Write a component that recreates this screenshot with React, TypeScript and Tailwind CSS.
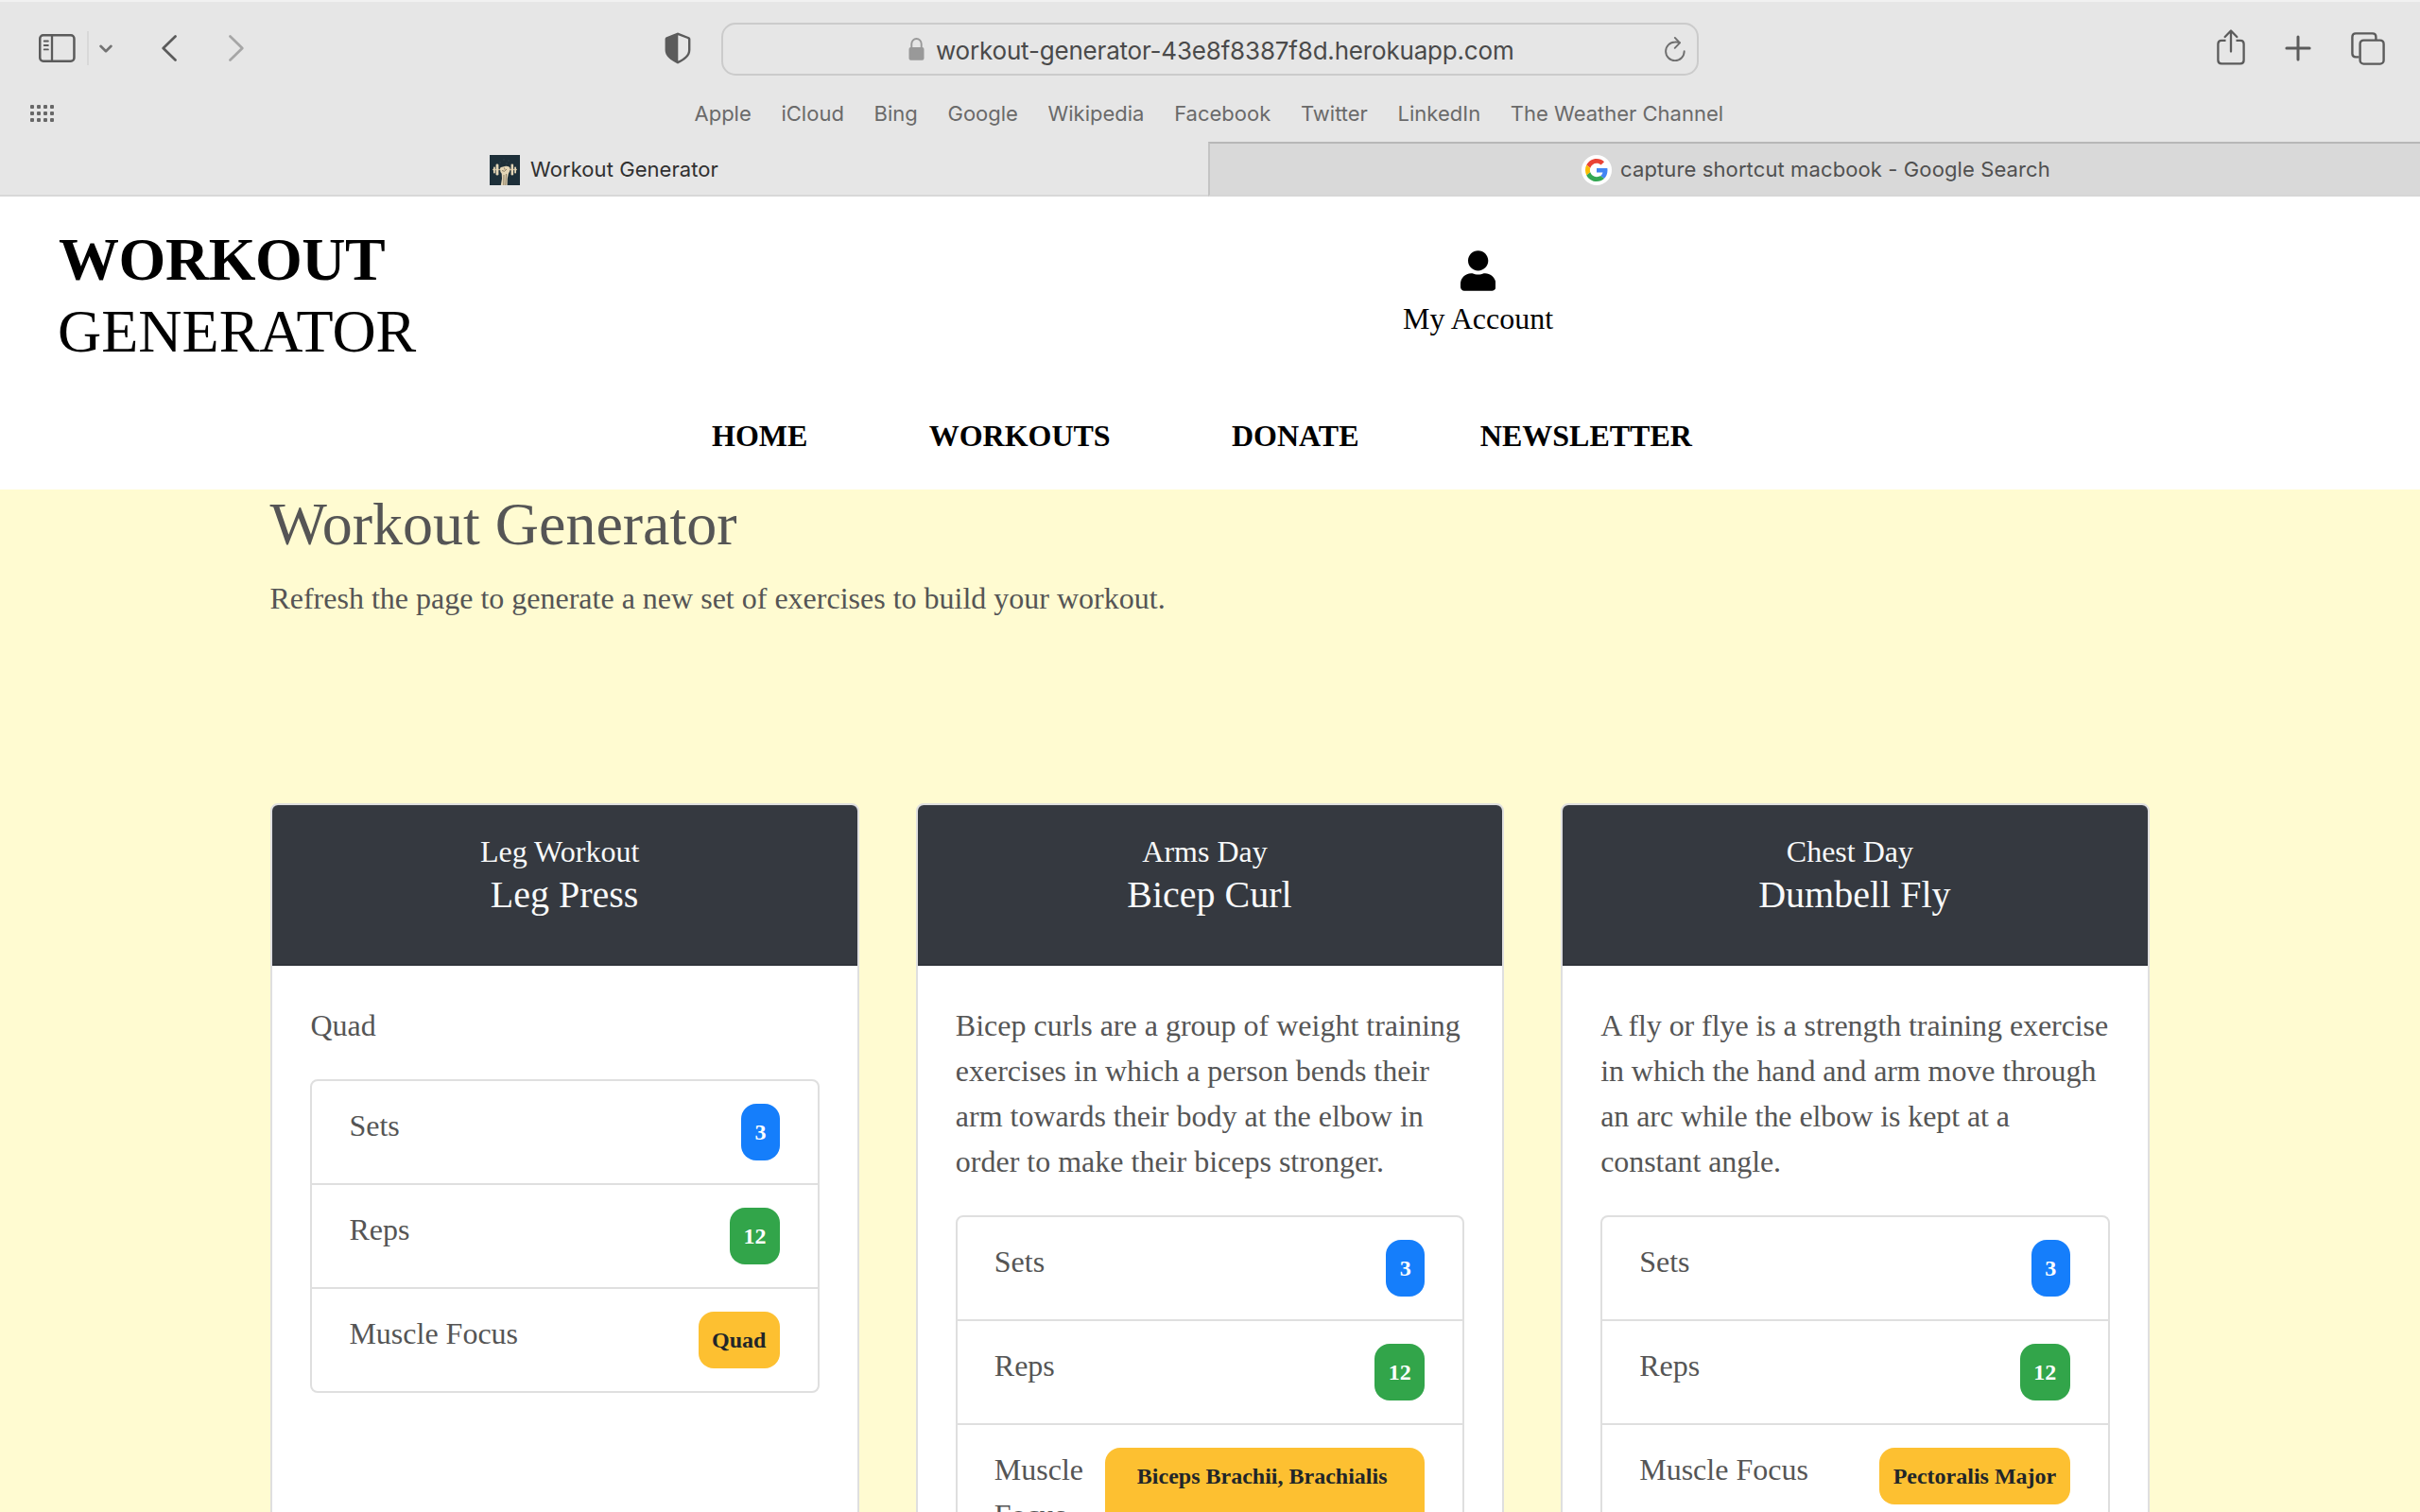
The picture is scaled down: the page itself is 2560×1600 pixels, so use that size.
import React from "react";
import { FaUser } from "react-icons/fa";

const bookmarks = ["Apple", "iCloud", "Bing", "Google", "Wikipedia", "Facebook", "Twitter", "LinkedIn", "The Weather Channel"];
const navLinks = ["HOME", "WORKOUTS", "DONATE", "NEWSLETTER"];

type Workout = {
  day: string;
  name: string;
  description: string;
  sets: number;
  reps: number;
  focus: string;
  wideFocus?: boolean;
  tight?: boolean;
};

const workouts: Workout[] = [
  { day: "Leg Workout", name: "Leg Press", description: "Quad", sets: 3, reps: 12, focus: "Quad" },
  {
    day: "Arms Day",
    name: "Bicep Curl",
    description:
      "Bicep curls are a group of weight training exercises in which a person bends their arm towards their body at the elbow in order to make their biceps stronger.",
    sets: 3,
    reps: 12,
    focus: "Biceps Brachii, Brachialis\u00a0",
    wideFocus: true,
  },
  {
    day: "Chest Day",
    name: "Dumbell Fly",
    description:
      "A fly or flye is a strength training exercise in which the hand and arm move through an arc while the elbow is kept at a constant angle.",
    sets: 3,
    reps: 12,
    focus: "Pectoralis Major",
    tight: true,
  },
];

function SidebarIcon() {
  return (
    <svg width="39" height="30" viewBox="0 0 39 30" fill="none" stroke="#5b5b5b" strokeLinecap="round">
      <rect x="1.25" y="1.25" width="36.2" height="27.5" rx="3.5" strokeWidth="2.5" />
      <path d="M14 1.5v27" strokeWidth="2.3" strokeLinecap="butt" />
      <path d="M5.7 7.5h4.2M5.7 12h4.2M5.7 16.4h4.2" strokeWidth="1.8" />
    </svg>
  );
}

function ShieldIcon() {
  return (
    <svg width="28" height="34" viewBox="0 0 28 34">
      <path d="M14 0.6 26 5.2Q27.4 5.8 27.4 7.4V19C27.4 25.5 21.5 29.8 14 33.4 6.5 29.8 0.6 25.5 0.6 19V7.4Q0.6 5.8 2 5.2Z" fill="#5b5b5b" />
      <path d="M14.3 3.2 24.4 7Q25 7.3 25 8V19C25 23.9 20.7 27.5 14.3 30.6Z" fill="#e6e6e6" />
    </svg>
  );
}

function LockIcon() {
  return (
    <svg width="17" height="24" viewBox="0 0 17 24">
      <path d="M3.3 11V6.500a5.200 5.500 0 0 1 10.400 0V11" fill="none" stroke="#999" strokeWidth="1.9" />
      <rect x="0.5" y="10" width="16" height="13.7" rx="2" fill="#999" />
    </svg>
  );
}

function ReloadIcon() {
  return (
    <svg width="24" height="28" viewBox="0 0 24 28" fill="none" stroke="#6e6e6e" strokeWidth="1.9" strokeLinecap="round" strokeLinejoin="round">
      <path d="M21.7 16.3A9.8 9.8 0 1 1 11.9 6.500C13.8 6.3 15.6 6.6 16.8 7.1" />
      <path d="M11.8 1.9 17 7.3 11.7 12.8" />
    </svg>
  );
}

function ShareIcon() {
  return (
    <svg width="30" height="38" viewBox="0 0 30 38" fill="none" stroke="#5b5b5b" strokeWidth="2.3" strokeLinecap="round" strokeLinejoin="round">
      <path d="M9.5 11.9H5Q1.4 11.9 1.4 15.5V32.8Q1.4 36.4 5 36.4H25Q28.6 36.4 28.6 32.8V15.5Q28.6 11.9 25 11.9H20.5" strokeLinecap="butt" />
      <path d="M15 23.5V2M8.7 8 15 1.5 21.3 8" />
    </svg>
  );
}

function PlusIcon() {
  return (
    <svg width="28" height="28" viewBox="0 0 28 28" stroke="#5b5b5b" strokeWidth="3" strokeLinecap="round">
      <path d="M14 1.900v24.200M1.900 14h24.200" />
    </svg>
  );
}

function TabsIcon() {
  return (
    <svg width="36" height="35" viewBox="0 0 36 35" fill="none" stroke="#5b5b5b" strokeWidth="2.4">
      <path d="M8.5 26.4H5Q1.4 26.4 1.4 22.8V5Q1.4 1.4 5 1.4H22.8Q26.4 1.4 26.4 5V8" />
      <rect x="9.6" y="8.6" width="25" height="25" rx="3.8" />
    </svg>
  );
}

function GridIcon() {
  return (
    <svg width="25" height="18" viewBox="0 0 25 18" fill="#686868">
      {[0, 7, 14].map((y) => [0, 7, 14, 21].map((x) => <rect key={`${x}-${y}`} x={x} y={y} width="4" height="4" rx="1" />))}
    </svg>
  );
}

function DumbbellFavicon() {
  return (
    <svg width="32" height="32" viewBox="0 0 32 32">
      <rect width="32" height="32" fill="#1d2f39" />
      <g fill="#263a44">
        <circle cx="11" cy="8" r="1" /><circle cx="15" cy="5" r="1" /><circle cx="20" cy="6" r="1" /><circle cx="22" cy="10" r="1" /><circle cx="18" cy="9" r="1" />
      </g>
      <path d="M3 15.5h26" stroke="#b9a98a" strokeWidth="1.3" />
      <g fill="#e3d5b6">
        <rect x="4" y="12.5" width="1.8" height="7" rx=".8" />
        <rect x="6.6" y="9.5" width="2.8" height="12" rx="1.2" />
        <rect x="22.6" y="9.5" width="2.5" height="12" rx="1.2" />
        <rect x="26.2" y="12.5" width="1.8" height="7" rx=".8" />
        <path d="M11 14.5Q11 12.7 13 12.8L17 11.8Q20.5 11.5 21.6 13.7 21.8 17 19.8 20L18.8 25 18.6 32H11.8L13 25 12.7 19.8Q10.9 18 11 14.5Z" />
      </g>
      <path d="M13 16.5 15.5 17.3 18 15M15.5 13.5 16 15.5M15 21 14.8 32M17.5 20 16.8 32" stroke="#74674f" strokeWidth=".8" fill="none" />
    </svg>
  );
}

function GoogleLogo() {
  return (
    <svg width="24" height="24" viewBox="0 0 48 48">
      <path fill="#EA4335" d="M24 9.500c3.540 0 6.710 1.220 9.210 3.600l6.850-6.850C35.900 2.380 30.470 0 24 0 14.620 0 6.510 5.380 2.560 13.220l7.980 6.190C12.430 13.720 17.740 9.500 24 9.500z" />
      <path fill="#4285F4" d="M46.980 24.550c0-1.570-.15-3.090-.38-4.550H24v9.020h12.940c-.58 2.960-2.260 5.480-4.780 7.180l7.730 6c4.510-4.180 7.090-10.360 7.090-17.650z" />
      <path fill="#FBBC05" d="M10.530 28.590c-.48-1.450-.76-2.990-.76-4.590s.27-3.140.76-4.590l-7.980-6.190C.92 16.460 0 20.120 0 24c0 3.880.92 7.540 2.560 10.780l7.970-6.190z" />
      <path fill="#34A853" d="M24 48c6.480 0 11.930-2.130 15.890-5.810l-7.730-6c-2.150 1.450-4.920 2.300-8.160 2.300-6.260 0-11.570-4.220-13.470-9.910l-7.980 6.190C6.510 42.620 14.620 48 24 48z" />
    </svg>
  );
}

function BrowserChrome() {
  return (
    <div className="h-[208px] bg-[#e6e6e6] font-['Inter',sans-serif]">
      <div className="flex h-[104px] items-center border-t-2 border-[#f1f1f1] pr-[37px] pb-1 pl-[41px]">
        <SidebarIcon />
        <div className="ml-3 h-9 w-[2px] bg-[#d8d8d8]" />
        <svg className="ml-[11px]" width="14" height="9" viewBox="0 0 14 9" fill="none" stroke="#737373" strokeWidth="2.6" strokeLinecap="round" strokeLinejoin="round">
          <path d="M1.5 1.8 7 7.2 12.5 1.8" />
        </svg>
        <svg className="ml-[52px]" width="16" height="28" viewBox="0 0 16 28" fill="none" stroke="#5b5b5b" strokeWidth="2.7" strokeLinecap="round" strokeLinejoin="round">
          <path d="M14.5 1.5 1.7 14 14.5 26.5" />
        </svg>
        <svg className="ml-[55px]" width="16" height="28" viewBox="0 0 16 28" fill="none" stroke="#a6a6a6" strokeWidth="2.7" strokeLinecap="round" strokeLinejoin="round">
          <path d="M1.5 1.5 14.3 14 1.5 26.5" />
        </svg>
        <div className="ml-[445px]">
          <ShieldIcon />
        </div>
        <div className="mt-[2px] ml-8 flex h-14 w-[1034px] items-center rounded-[15px] border-2 border-[#cbcbcb] pl-[196px]">
          <LockIcon />
          <span className="ml-3 pt-[2px] text-[26px] tracking-[-0.190px] whitespace-nowrap text-[#4a4a4a]">
            workout-generator-43e8f8387f8d.herokuapp.com
          </span>
          <div className="mr-[11px] ml-auto">
            <ReloadIcon />
          </div>
        </div>
        <div className="ml-auto flex items-center">
          <div className="-mt-[2px]">
            <ShareIcon />
          </div>
          <div className="ml-[42px]">
            <PlusIcon />
          </div>
          <div className="ml-[42px]">
            <TabsIcon />
          </div>
        </div>
      </div>
      <div className="mb-[14px] flex h-8 items-center pl-8">
        <GridIcon />
        <div className="ml-[677.5px] flex gap-[31.700px] text-[22px] leading-8 whitespace-nowrap text-[#6a6a6a]">
          {bookmarks.map((b) => (
            <span key={b}>{b}</span>
          ))}
        </div>
      </div>
      <div className="flex h-[58px] text-[22px]">
        <div className="flex w-[1278px] items-center justify-center border-b-2 border-[#d8d8d8] pt-[3px] text-[#303030]">
          <DumbbellFavicon />
          <span className="ml-[11px] tracking-[0.070px]">Workout Generator</span>
        </div>
        <div className="flex flex-1 items-center justify-center border-t-2 border-b-2 border-l-2 border-t-[#b7b7b7] border-b-[#d6d6d6] border-l-[#c4c4c4] bg-[#d9d9d9] pt-px text-[#505050]">
          <div className="ml-[2px] flex size-8 items-center justify-center rounded-full bg-white">
            <GoogleLogo />
          </div>
          <span className="ml-[9px] tracking-[0.110px]">capture shortcut macbook - Google Search</span>
        </div>
      </div>
    </div>
  );
}

function StatRow({ label, value, color, wide }: { label: string; value: string | number; color: string; wide?: boolean }) {
  return (
    <li className="flex justify-between border-t-2 border-[#dfdfdf] px-10 py-6 first:border-t-0">
      <span className="-mt-px -ml-px">{label}</span>
      <span
        className={`shrink-0 rounded-[16px] px-[14.400px] py-[18px] text-center text-2xl leading-6 font-bold ${wide ? "w-[338px]" : ""} ${color}`}
      >
        {value}
      </span>
    </li>
  );
}

function WorkoutCard({ workout }: { workout: Workout }) {
  return (
    <article className="flex min-h-[1000px] flex-1 flex-col overflow-hidden rounded-lg border-2 border-[#dfdfdf] bg-white">
      <header className="h-[170px] border-b-2 border-[#2f333a] bg-[#353940] pt-[25px] text-center text-[#f8f9fa]">
        <div className="pr-[11px] text-[32px] leading-[48px]">{workout.day}</div>
        <h2 className="-mt-[2px] pr-px text-[40px] leading-[48px]">{workout.name}</h2>
      </header>
      <div className="px-10 pt-[39px]">
        <p className={`mb-[33px] ${workout.tight ? "-mr-1 tracking-[-0.075px]" : ""}`}>{workout.description}</p>
        <ul className="rounded-lg border-2 border-[#dfdfdf]">
          <StatRow label="Sets" value={workout.sets} color="bg-[#157efb] text-white" />
          <StatRow label="Reps" value={workout.reps} color="bg-[#32a54a] text-white" />
          <StatRow label="Muscle Focus" value={workout.focus} color="bg-[#fdc031] text-[#212529]" wide={workout.wideFocus} />
        </ul>
      </div>
    </article>
  );
}

export default function App() {
  return (
    <div className="h-[1600px] w-[2560px] overflow-hidden bg-white">
      <BrowserChrome />
      <header className="h-[310px] bg-white font-['Liberation_Serif',serif] text-black">
        <div className="flex items-start pt-[29px] pl-[62px]">
          <div className="w-[1422px] text-[64px] leading-[76px]">
            <div className="font-bold tracking-[-0.450px]">WORKOUT</div>
            <div className="-ml-[1px]">GENERATOR</div>
          </div>
          <div className="flex flex-col items-center pt-7 text-[32px] leading-[48px]">
            <FaUser className="mb-[5px] h-[43px] w-[37.300px]" />
            <span>My Account</span>
          </div>
        </div>
        <nav className="mt-12 ml-[753px] flex gap-[128.300px] text-[32px] leading-[48px] font-bold">
          {navLinks.map((l) => (
            <a key={l}>{l}</a>
          ))}
        </nav>
      </header>
      <main className="h-[1082px] bg-[#fffbd1] px-[286.400px] font-['Liberation_Serif',serif] text-[32px] leading-[48px] text-[#555]">
        <h1 className="-ml-px text-[64px] leading-[74px]">Workout Generator</h1>
        <p className="mt-[17px] -ml-px">Refresh the page to generate a new set of exercises to build your workout.</p>
        <div className="mt-[193px] flex gap-[60px]">
          {workouts.map((w) => (
            <WorkoutCard key={w.name} workout={w} />
          ))}
        </div>
      </main>
    </div>
  );
}
